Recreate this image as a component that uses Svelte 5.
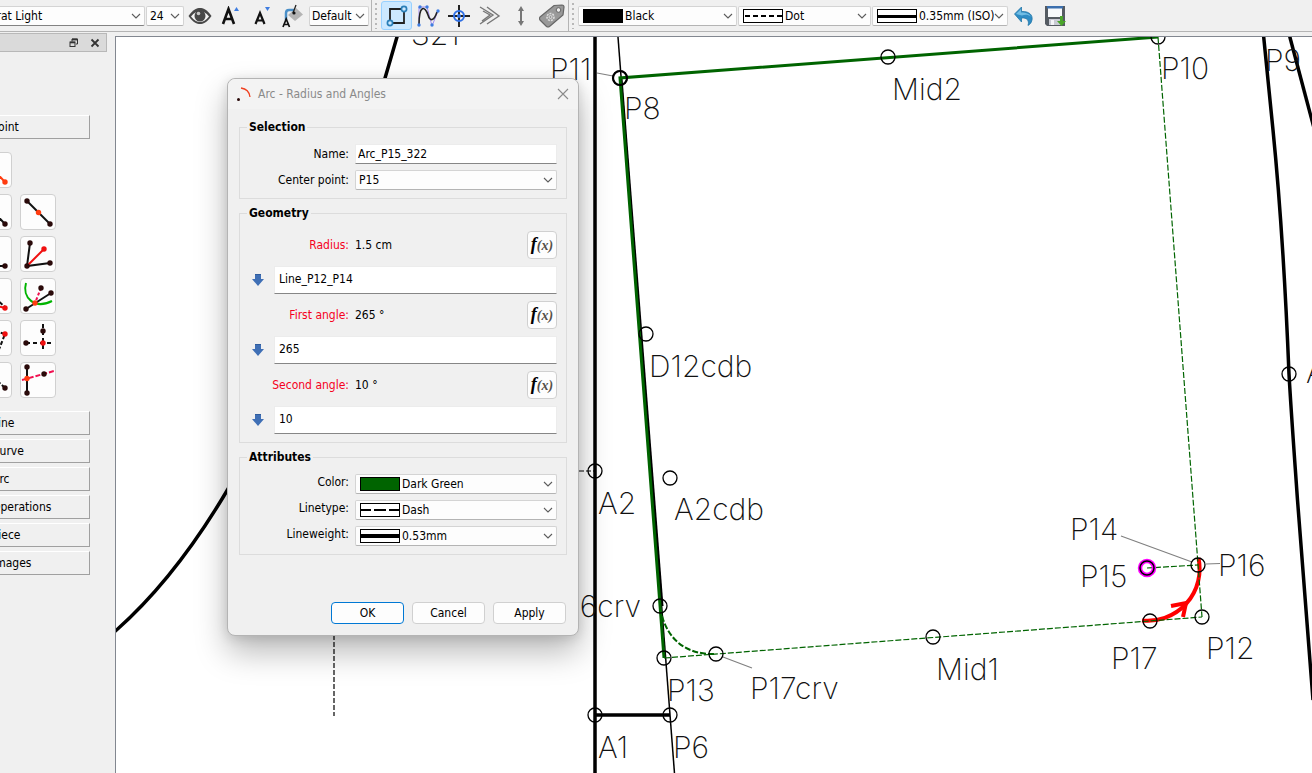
<script>
  const toolGroups = ['Point', 'Line', 'Curve', 'Arc', 'Operations', 'Piece', 'Images'];

  const nodes = [
    [620, 78], [888, 57], [1158, 37], [646, 334], [670, 478], [595, 471],
    [660, 606], [664, 658], [716, 654], [595, 715], [670, 715], [933, 637],
    [1150, 621], [1202, 617], [1198, 565], [1289, 374],
  ];

  const labels = [
    { text: 'S21', x: 411, y: 45 },
    { text: 'P11', x: 550, y: 80 },
    { text: 'P8', x: 624, y: 119 },
    { text: 'Mid2', x: 892, y: 100 },
    { text: 'P10', x: 1161, y: 79 },
    { text: 'P9', x: 1265, y: 71 },
    { text: 'D12cdb', x: 649, y: 377 },
    { text: 'A2', x: 598, y: 514 },
    { text: 'A2cdb', x: 674, y: 520 },
    { text: 'P14', x: 1070, y: 540 },
    { text: 'P15', x: 1080, y: 587 },
    { text: 'P16', x: 1218, y: 576 },
    { text: 'P12', x: 1206, y: 659 },
    { text: 'P17', x: 1111, y: 669 },
    { text: 'Mid1', x: 936, y: 680 },
    { text: 'P13', x: 667, y: 701 },
    { text: 'P17crv', x: 750, y: 699 },
    { text: 'A1', x: 598, y: 758 },
    { text: 'P6', x: 673, y: 758 },
  ];

  let name = $state('Arc_P15_322');

  let formulas = $state([
    { id: 'radius', label: 'Radius:', result: '1.5 cm', value: 'Line_P12_P14' },
    { id: 'first-angle', label: 'First angle:', result: '265 °', value: '265' },
    { id: 'second-angle', label: 'Second angle:', result: '10 °', value: '10' },
  ]);
</script>

{#snippet chevron()}
  <svg class="chevron" width="10" height="6" viewBox="0 0 10 6" aria-hidden="true">
    <path d="M1 1l4 4 4-4" fill="none" stroke="#5c5c5c" stroke-width="1.1" />
  </svg>
{/snippet}

{#snippet swatch(kind)}
  <svg class="swatch" width="40" height="14" aria-hidden="true">
    <rect x="0.5" y="0.5" width="39" height="13" fill={kind === 'black' ? '#000' : kind === 'green' ? '#006400' : '#fff'} stroke="#000" />
    {#if kind === 'dot'}
      <path d="M0 7h40" stroke="#000" stroke-width="2" stroke-dasharray="5 3" stroke-dashoffset="-2" />
    {:else if kind === 'dash'}
      <path d="M0 7h40" stroke="#000" stroke-width="2" stroke-dasharray="12 3" stroke-dashoffset="1" />
    {:else if kind === 'thin'}
      <path d="M0 7.5h40" stroke="#000" stroke-width="3" />
    {:else if kind === 'thick'}
      <path d="M0 7h40" stroke="#000" stroke-width="4" />
    {/if}
  </svg>
{/snippet}

{#snippet combo(id, value, kind, label)}
  <div class="combo {id}">
    {#if kind}{@render swatch(kind)}{/if}
    <select {id} aria-label={label}>
      <option>{value}</option>
    </select>
    {@render chevron()}
  </div>
{/snippet}

<div class="app">
  <div class="window">
    <header class="toolbar">
      {@render combo('font-family', 'Montserrat Light', null, 'Font')}
      {@render combo('font-size', '24', null, 'Font size')}
      <button class="tool" aria-label="Show point names">
        <svg width="24" height="18" viewBox="0 0 24 18">
          <path d="M0.5 9C5 2.500 9 1 12 1s7 1.500 11.500 8C19 15.500 15 17 12 17S5 15.500 0.500 9z" fill="#484848" />
          <path d="M3 9.500C6 5.500 9 4.500 12 4.500s6 1 9 5c-3 4-6 5.500-9 5.500s-6-1.500-9-5.500z" fill="#f4f4f4" />
          <circle cx="12" cy="9" r="5.500" fill="#484848" />
          <circle cx="10.500" cy="6.500" r="1.800" fill="#c8c8c8" />
        </svg>
      </button>
      <button class="tool" aria-label="Increase label size">
        <svg width="20" height="20" viewBox="0 0 20 20">
          <path d="M2 18L7.500 3l5.500 15M3.500 13h8" fill="none" stroke="#111" stroke-width="2.600" />
          <path d="M13 5l2.500-4L18 5z" fill="#3f7de0" />
        </svg>
      </button>
      <button class="tool" aria-label="Decrease label size">
        <svg width="20" height="20" viewBox="0 0 20 20">
          <path d="M3.500 18L8 7l4.500 11M5 14.500h6" fill="none" stroke="#111" stroke-width="2.200" />
          <path d="M13 1h5l-2.500 4z" fill="#3f7de0" />
        </svg>
      </button>
      <button class="tool" aria-label="Label color">
        <svg width="22" height="24" viewBox="0 0 22 24">
          <path d="M6 11l8-7 7 6.500-8 6.500z" fill="#b4b4b4" />
          <path d="M4 16V9q0-3 3-3h5" fill="none" stroke="#4a8fc8" stroke-width="2.500" />
          <path d="M11 9L14 1" stroke="#222" stroke-width="1.300" />
          <circle cx="12" cy="9" r="1.600" fill="#111" />
          <path d="M1 23l3.200-8 3.300 8M2 20.500h4.500" fill="none" stroke="#111" stroke-width="1.700" />
        </svg>
      </button>
      {@render combo('label-color', 'Default', null, 'Label color')}

      <span class="divider"></span>
      <span class="grip"></span>

      <button class="tool active" aria-label="Toggle control points" aria-pressed="true">
        <svg width="22" height="22" viewBox="0 0 22 22">
          <path d="M4 15V4h11M18 7v11H7" fill="none" stroke="#222" stroke-width="1.800" />
          <circle cx="18" cy="4" r="2.600" fill="#cce8ff" stroke="#2b7fb8" stroke-width="1.700" />
          <circle cx="4" cy="18" r="2.600" fill="#cce8ff" stroke="#2b7fb8" stroke-width="1.700" />
        </svg>
      </button>
      <button class="tool" aria-label="Toggle curve handles">
        <svg width="24" height="24" viewBox="0 0 24 24">
          <path d="M3 22V3h8l5 19 6-15" fill="none" stroke="#a08cf0" />
          <path d="M3 21C3 0 9 2 12 11c2 7 6 6 9-3" fill="none" stroke="#222" stroke-width="1.600" />
          <g fill="#3f7de0">
            <circle cx="3" cy="21" r="1.700" /><circle cx="4" cy="3" r="1.700" /><circle cx="11" cy="3" r="1.700" />
            <circle cx="16" cy="21" r="1.700" /><circle cx="22" cy="7" r="1.700" />
          </g>
        </svg>
      </button>
      <button class="tool" aria-label="Show axis origin">
        <svg width="22" height="22" viewBox="0 0 22 22">
          <path d="M11 0v22M0 11h22" stroke="#222" stroke-width="2" />
          <circle cx="11" cy="11" r="5" fill="none" stroke="#2f6fe4" stroke-width="2" />
          <circle cx="11" cy="11" r="2" fill="#2f6fe4" />
        </svg>
      </button>
      <button class="tool" aria-label="Show wireframe">
        <svg width="22" height="20" viewBox="0 0 22 20" fill="none" stroke="#777" stroke-width="1.400">
          <path d="M1 1l13 8L1 18M4 5l7 4-8 6M8 1l12 9L8 18" />
        </svg>
      </button>
      <button class="tool" aria-label="Show grainline">
        <svg width="8" height="20" viewBox="0 0 8 20" fill="#777">
          <path d="M4 0l3 5H5v3H3V5H1zM4 20l3-5H5v-3H3v3H1z" />
          <path d="M3 8h2v4H3z" />
        </svg>
      </button>
      <button class="tool" aria-label="Show labels">
        <svg width="26" height="24" viewBox="0 0 26 24">
          <path d="M1 13L15 1.500l8-.5q2 0 2 2l-1 8L10.500 22.500q-1.500 1-3 0L1 16q-1-1.500 0-3z" fill="#999" stroke="#666" stroke-width="1.200" />
          <circle cx="19.500" cy="6" r="2.300" fill="#eee" stroke="#666" />
          <circle cx="11.500" cy="13" r="3.500" fill="none" stroke="#ddd" stroke-width="1.600" stroke-dasharray="2 1" />
          <circle cx="11.500" cy="13" r="1.500" fill="none" stroke="#ddd" />
        </svg>
      </button>

      <span class="divider"></span>
      <span class="grip"></span>

      {@render combo('pen-color', 'Black', 'black', 'Pen color')}
      {@render combo('pen-type', 'Dot', 'dot', 'Pen line type')}
      {@render combo('pen-weight', '0.35mm (ISO)', 'thin', 'Pen line weight')}
      <button class="tool" aria-label="Reset pen">
        <svg width="20" height="20" viewBox="0 0 20 20">
          <path d="M0.500 8L7.500 1v4.500C15 5 19 9 18 14q-.5 3.500-4 5.500c1.500-5-1-8-6.500-7.500V16z" fill="#2f8cc4" stroke="#2377a8" stroke-width="0.800" />
          <path d="M2 8l5-5v3.500c5 0 8 1 10 4-3-2-6-2-9-1z" fill="#72bde4" />
        </svg>
      </button>
      <button class="tool" aria-label="Save pen">
        <svg width="22" height="22" viewBox="0 0 22 22">
          <path d="M1 1h20v20H3l-2-2z" fill="#555b62" />
          <path d="M4 2h14v10H4z" fill="#f7f9fb" />
          <path d="M3 1h16v2.500H3z" fill="#3c6fae" />
          <path d="M5 14h12v6H5z" fill="#c9cbd4" />
          <path d="M7 15h3v5H7z" fill="#f4f4f8" />
          <path d="M16 11h3v5h3l-4.500 5-4.500-5h3z" fill="#4aa52a" />
        </svg>
      </button>
    </header>

    <div class="workspace">
      <aside class="dock">
        <div class="dock-title">
          <button aria-label="Float panel">
            <svg width="10" height="10" viewBox="0 0 10 10" fill="none" stroke="#333">
              <path d="M3 3.500V1h5.500v5H7" /><path d="M3 1.500h5.500" stroke-width="1.800" />
              <rect x="1" y="4" width="5" height="4.500" /><path d="M1 4.500h5" stroke-width="1.600" />
            </svg>
          </button>
          <button aria-label="Close panel">
            <svg width="10" height="10" viewBox="0 0 10 10"><path d="M1.500 1.500l7 7M8.500 1.500l-7 7" stroke="#333" stroke-width="1.800" /></svg>
          </button>
        </div>

        <div class="toolbox">
          <button class="group">{toolGroups[0]}</button>
          <div class="tools">
            <button class="draw" aria-label="Point at distance and angle">
              <svg viewBox="0 0 34 34"><path d="M6 6l22 23" stroke="#ff3c10" stroke-width="2" /><circle cx="28" cy="29" r="2.700" fill="#ff3c10" /></svg>
            </button>
            <span></span>
            <button class="draw" aria-label="Point along line">
              <svg viewBox="0 0 34 34"><path d="M6 6l22 23" stroke="#111" stroke-width="2" /><circle cx="28" cy="29" r="2.700" fill="#2a0a0a" /></svg>
            </button>
            <button class="draw" aria-label="Midpoint">
              <svg viewBox="0 0 34 34"><path d="M6 6l23 23" stroke="#111" stroke-width="2" /><g fill="#2a0a0a"><circle cx="6" cy="6" r="2.700" /><circle cx="29" cy="29" r="2.700" /></g><circle cx="17.500" cy="17.500" r="2.700" fill="#ff3c10" /></svg>
            </button>
            <button class="draw" aria-label="Perpendicular point">
              <svg viewBox="0 0 34 34"><path d="M6 29h22" stroke="#111" stroke-width="2" /><circle cx="28" cy="29" r="2.700" fill="#2a0a0a" /></svg>
            </button>
            <button class="draw" aria-label="Bisector">
              <svg viewBox="0 0 34 34"><path d="M9 6L6 29l23-3" fill="none" stroke="#111" stroke-width="2" /><path d="M6 29l17-17" stroke="#f01010" stroke-width="2" /><circle cx="23" cy="12" r="2.700" fill="#f01010" /><g fill="#2a0a0a"><circle cx="9" cy="6" r="2.700" /><circle cx="6" cy="29" r="2.700" /><circle cx="29" cy="26" r="2.700" /></g></svg>
            </button>
            <button class="draw" aria-label="Shoulder point">
              <svg viewBox="0 0 34 34"><path d="M18 19l10 9" stroke="#111" stroke-width="2" stroke-dasharray="4 2" /><path d="M16 26l12 3" stroke="#f01010" stroke-width="2" /><circle cx="28" cy="29" r="2.700" fill="#f01010" /></svg>
            </button>
            <button class="draw" aria-label="Arc and line intersection">
              <svg viewBox="0 0 34 34"><path d="M5 4C1 18 13 31 31 22" fill="none" stroke="#00b400" stroke-width="2" /><path d="M5 30l25-16" stroke="#111" stroke-width="2" /><path d="M20 9l-6 15" stroke="#f01050" stroke-width="2" stroke-dasharray="3 2" /><circle cx="14" cy="24" r="2.700" fill="#ff3c10" /><g fill="#2a0a0a"><circle cx="5" cy="30" r="2.700" /><circle cx="30" cy="14" r="2.700" /><circle cx="20" cy="9" r="2.700" /></g></svg>
            </button>
            <button class="draw" aria-label="Triangle">
              <svg viewBox="0 0 34 34"><path d="M18 10l10 3-7 18" fill="none" stroke="#111" stroke-width="2" stroke-dasharray="4 2" /><circle cx="28" cy="13" r="2.700" fill="#f01010" /></svg>
            </button>
            <button class="draw" aria-label="Point intersect XY">
              <svg viewBox="0 0 34 34"><path d="M22 3v28M5 22h26" stroke="#111" stroke-width="2" stroke-dasharray="4 3" /><circle cx="22" cy="22" r="2.700" fill="#f01010" /><g fill="#2a0a0a"><circle cx="22" cy="10" r="2.700" /><circle cx="5" cy="22" r="2.700" /></g></svg>
            </button>
            <button class="draw" aria-label="Line intersection">
              <svg viewBox="0 0 34 34"><path d="M16 14l12 11" stroke="#111" stroke-width="2" stroke-dasharray="4 2" /><circle cx="28" cy="25" r="2.700" fill="#2a0a0a" /></svg>
            </button>
            <button class="draw" aria-label="Intersect line and axis">
              <svg viewBox="0 0 34 34"><path d="M6 4v26" stroke="#111" stroke-width="2" /><path d="M1 17l32-9" stroke="#f01050" stroke-width="2" stroke-dasharray="5 2" /><circle cx="6" cy="15.500" r="2.700" fill="#ff3c10" /><g fill="#2a0a0a"><circle cx="6" cy="4" r="2.700" /><circle cx="6" cy="30" r="2.700" /><circle cx="23" cy="11" r="2.700" /></g></svg>
            </button>
          </div>
          {#each toolGroups.slice(1) as group}
            <button class="group">{group}</button>
          {/each}
        </div>
      </aside>

      <main class="canvas">
        <svg width="100%" height="100%">
          <g transform="translate(-116 -37)" fill="none">
            <g stroke="#000" stroke-width="3.500">
              <path d="M399 30C350 200 300 370 228 489C195 545 155 597 112 634" />
              <path d="M1263 30L1273 130C1282 220 1286 300 1289 374C1291 410 1294 450 1297.500 500L1313 700" />
              <path d="M1288 30L1314 128" />
              <path d="M595 30V780M595 715H670" />
            </g>
            <path d="M618 37L675 780" stroke="#000" stroke-width="1.500" />
            <path d="M621 78L662 606" stroke="#000" stroke-width="3" />
            <g stroke="#000" stroke-width="1.200">
              <path d="M334 600V716" stroke-dasharray="5 2" />
              <path d="M558 471H595" stroke-dasharray="5 2" />
            </g>
            <g stroke="#808080" stroke-width="1.200">
              <path d="M597 73L613 76M1121 536L1192 562M1206 564L1220 563.500M723 657L752 668" />
            </g>
            <path d="M1142 620.500A52 52 0 0 0 1198.500 558" stroke="#f00" stroke-width="4" />
            <path d="M1171 606L1186 603L1183 617" stroke="#f00" stroke-width="4" />
            <path d="M664 658L620 78L1158 37" stroke="#006400" stroke-width="3" />
            <g stroke="#006400" stroke-width="1.200" stroke-dasharray="6 2">
              <path d="M1158 37L1202 617" />
              <path d="M664 658L1202 617" />
              <path d="M1147 568L1198 565" />
              <path d="M662 616C669 640 686 655 716 654" stroke-width="2" />
            </g>
            <circle cx="1147" cy="568" r="7" stroke="#f0f" stroke-width="4.500" />
            <circle cx="1147" cy="568" r="7" stroke="#000" stroke-width="1.500" />
            <circle cx="620" cy="78" r="7" stroke="#000" stroke-width="2.200" />
            {#each nodes as [cx, cy]}
              <circle {cx} {cy} r="7" stroke="#000" stroke-width="1.300" />
            {/each}
            {#each labels as label}
              <text x={label.x} y={label.y}>{label.text}</text>
            {/each}
            <text x="641" y="617" text-anchor="end">P16crv</text>
            <text x="1306" y="383">A</text>
          </g>
        </svg>
      </main>
    </div>
  </div>

  <form class="dialog" aria-labelledby="dialog-title" onsubmit={(e) => e.preventDefault()}>
    <div class="titlebar">
      <svg width="16" height="16" viewBox="0 0 16 16" aria-hidden="true">
        <path d="M5 2q8 1 9 9" fill="none" stroke="#f04020" stroke-width="1.300" />
        <circle cx="2.500" cy="13.500" r="1.500" fill="#2a0a0a" />
      </svg>
      <span id="dialog-title">Arc - Radius and Angles</span>
      <button type="button" class="close" aria-label="Close">
        <svg width="12" height="12" viewBox="0 0 12 12"><path d="M1 1l10 10M11 1L1 11" stroke="#8a8a8a" stroke-width="1.100" /></svg>
      </button>
    </div>

    <div class="body">
      <fieldset class="rows">
        <legend>Selection</legend>
        <label for="name">Name:</label>
        <input id="name" class="line" bind:value={name} />
        <label for="center-point">Center point:</label>
        {@render combo('center-point', 'P15')}
      </fieldset>

      <fieldset class="geometry">
        <legend>Geometry</legend>
        {#each formulas as formula}
          <div class="result">
            <label for={formula.id}>{formula.label}</label>
            <output for={formula.id}>{formula.result}</output>
            <button type="button" class="fx" aria-label="Edit formula"><b>f</b><i>(x)</i></button>
          </div>
          <div class="formula">
            <svg width="12" height="14" viewBox="0 0 12 14" aria-hidden="true">
              <path d="M3 1h6v5h3l-6 7-6-7h3z" fill="#3f6fb5" />
              <path d="M3 1h6v1H3z" fill="#2f5c9e" />
            </svg>
            <input id={formula.id} class="line" bind:value={formula.value} />
          </div>
        {/each}
      </fieldset>

      <fieldset class="rows attributes">
        <legend>Attributes</legend>
        <label for="color">Color:</label>
        {@render combo('color', 'Dark Green', 'green')}
        <label for="linetype">Linetype:</label>
        {@render combo('linetype', 'Dash', 'dash')}
        <label for="lineweight">Lineweight:</label>
        {@render combo('lineweight', '0.53mm', 'thick')}
      </fieldset>

      <div class="actions">
        <button class="default">OK</button>
        <button type="button">Cancel</button>
        <button type="button">Apply</button>
      </div>
    </div>
  </form>
</div>

<style>
  :global(body) {
    margin: 0;
    overflow: hidden;
  }

  .app {
    position: relative;
    height: 100vh;
    overflow: hidden;
    background: #f0f0f0;
    color: #000;
    font: 12px/16px 'DejaVu Sans Condensed', 'DejaVu Sans', sans-serif;
    font-stretch: condensed;
  }

  /* the window hangs over the left screen edge */
  .window {
    display: flex;
    flex-direction: column;
    height: 100%;
    margin-left: -60px;
  }

  button,
  input,
  select {
    box-sizing: border-box;
    margin: 0;
    padding: 0;
    font: inherit;
    color: inherit;
  }

  button {
    border: none;
    background: none;
  }

  .toolbar {
    display: flex;
    align-items: center;
    height: 31px;
    border-bottom: 1px solid #b4b4b4;
  }

  .tool {
    flex: none;
    display: flex;
    align-items: center;
    justify-content: center;
    width: 31px;
    height: 29px;
  }

  .tool.active {
    border: 1px solid #99d1ff;
    border-radius: 3px;
    background: #cce8ff;
  }

  .divider {
    width: 1px;
    height: 31px;
    margin: 0 3px 0 1px;
    background: #b4b4b4;
  }

  .grip {
    width: 2px;
    height: 26px;
    margin-right: 4px;
    background: repeating-linear-gradient(#b8b8b8 0 2px, transparent 2px 5px);
  }

  .combo {
    flex: none;
    display: flex;
    align-items: center;
    box-sizing: border-box;
    height: 20px;
    border: 1px solid #d4d4d4;
    border-bottom-color: #b4b4b4;
    border-radius: 2px;
    background: #fdfdfd;
    padding: 0 3px;
  }

  .combo select {
    flex: 1;
    min-width: 0;
    height: 18px;
    border: none;
    outline: none;
    background: none;
    appearance: none;
  }

  .swatch {
    flex: none;
    margin: 0 2px 0 1px;
  }

  .chevron {
    flex: none;
  }

  .font-family {
    width: 205px;
    margin-right: 1px;
    border-bottom-color: #828282;
    padding-left: 12px;
  }

  .font-size {
    width: 38px;
  }

  .label-color {
    width: 60px;
    margin: 0 1px;
    border-bottom-color: #828282;
    padding: 0 3px 0 2px;
  }

  .pen-color {
    width: 159px;
    margin-right: 1px;
  }

  .pen-type {
    width: 133px;
    margin-right: 1px;
  }

  .pen-weight {
    width: 136px;
  }

  .workspace {
    flex: 1;
    display: flex;
    min-height: 0;
  }

  .dock {
    flex: none;
    width: 167px;
    margin-right: 8px;
  }

  .dock-title {
    display: flex;
    justify-content: flex-end;
    align-items: center;
    gap: 11px;
    box-sizing: border-box;
    height: 19px;
    margin-top: 1px;
    padding-right: 6px;
    border: 1px solid #b8b8b8;
    background: #dadada;
  }

  .dock-title button {
    display: flex;
  }

  .toolbox {
    display: flex;
    flex-direction: column;
    gap: 4px;
    padding: 63px 17px 0 0;
  }

  .group {
    height: 24px;
    border: 1px solid #a0a0a0;
    border-top-color: #fff;
    padding-left: 51px;
    text-align: left;
  }

  .tools {
    display: grid;
    grid-template-columns: 36px 36px;
    gap: 6px 8px;
    padding: 9px 0 9px 36px;
  }

  .draw {
    height: 36px;
    border: 1px solid #d0d0d0;
    border-radius: 4px;
    background: #fdfdfd;
  }

  .draw svg {
    display: block;
    width: 34px;
    height: 34px;
  }

  .canvas {
    flex: 1;
    min-width: 0;
    margin-top: 4px;
    border: 1px solid #828790;
    border-width: 1px 0 0 1px;
    background: #fff;
  }

  .canvas svg {
    display: block;
  }

  .canvas text {
    fill: #111;
    font: 200 30px Inter, 'Open Sans', sans-serif;
  }

  .dialog {
    position: absolute;
    left: 227px;
    top: 78px;
    box-sizing: border-box;
    width: 352px;
    border: 1px solid #b4b4b4;
    border-radius: 8px;
    background: #f0f0f0;
    box-shadow: 0 16px 32px rgba(0, 0, 0, 0.28), 0 2px 12px rgba(0, 0, 0, 0.12);
  }

  .titlebar {
    display: flex;
    align-items: center;
    gap: 6px;
    height: 30px;
    padding: 0 9px 0 8px;
    border-radius: 8px 8px 0 0;
    background: #f3f3f3;
    color: #8a8a8a;
  }

  .close {
    display: flex;
    margin-left: auto;
  }

  .body {
    display: flex;
    flex-direction: column;
    gap: 6px;
    padding: 10px 11px 11px;
  }

  fieldset {
    margin: 0;
    min-width: 0;
    border: 1px solid #dcdcdc;
    padding: 9px 9px 8px 0;
  }

  legend {
    margin-left: 7px;
    padding: 0 2px;
    font-weight: bold;
  }

  label {
    text-align: right;
  }

  .rows {
    display: grid;
    grid-template-columns: 109px 1fr;
    grid-auto-rows: 20px;
    align-items: center;
    gap: 6px;
  }

  .attributes label {
    align-self: start;
  }

  .line {
    min-width: 0;
    height: 20px;
    border: 1px solid #ececec;
    border-bottom-color: #868686;
    outline: none;
    background: #fff;
    padding: 0 2px;
  }

  .geometry {
    padding-top: 10px;
  }

  .result {
    display: grid;
    grid-template-columns: 109px 1fr 30px;
    align-items: center;
    column-gap: 6px;
    height: 28px;
    margin-bottom: 7px;
  }

  .result label {
    color: #f5001d;
  }

  .fx {
    height: 28px;
    border: 1px solid #d0d0d0;
    border-radius: 4px;
    background: #fdfdfd;
    font-family: 'Liberation Serif', serif;
    font-style: italic;
    font-weight: bold;
  }

  .fx b {
    font-size: 18px;
  }

  .fx i {
    color: #55504a;
    font-size: 14px;
  }

  .formula {
    display: flex;
    align-items: center;
    gap: 10px;
    padding-left: 12px;
  }

  .formula + .result {
    margin-top: 7px;
  }

  .formula .line {
    flex: 1;
    height: 28px;
    padding: 0 4px 2px;
  }

  .actions {
    display: flex;
    justify-content: flex-end;
    gap: 8px;
    padding: 41px 1px 0 0;
  }

  .actions button {
    width: 73px;
    height: 22px;
    border: 1px solid #d0d0d0;
    border-radius: 4px;
    background: #fdfdfd;
  }

  .actions .default {
    border-color: #0078d4;
  }
</style>
